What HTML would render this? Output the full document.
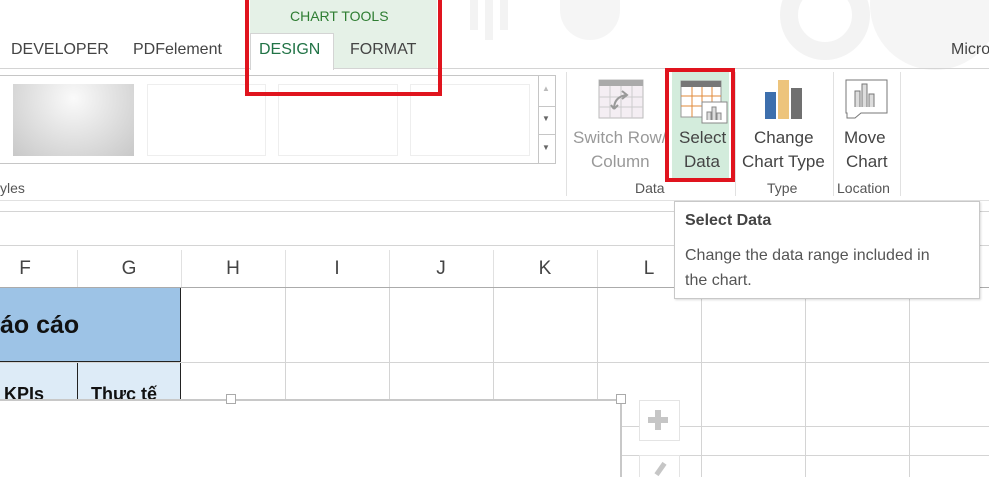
<!DOCTYPE html>
<html style="overflow:hidden;height:477px"><head><meta charset="utf-8"><style>
*{margin:0;padding:0;box-sizing:border-box}
body{width:989px;height:477px;overflow:hidden;background:#fff;font-family:"Liberation Sans",sans-serif;position:relative;color:#444}
.a{position:absolute}
.t{font-size:16px;color:#444;white-space:nowrap}
.vl{position:absolute;width:1px;background:#d4d4d4}
.hl{position:absolute;height:1px;background:#d4d4d4}
.col{position:absolute;top:258px;font-size:19px;color:#444;width:104px;text-align:center}
</style></head><body>
<div class="a" style="left:470px;top:0;width:8px;height:30px;background:#f3f3f3"></div>
<div class="a" style="left:485px;top:0;width:8px;height:40px;background:#f3f3f3"></div>
<div class="a" style="left:500px;top:0;width:8px;height:30px;background:#f3f3f3"></div>
<div class="a" style="left:560px;top:0;width:60px;height:40px;background:#f5f5f5;border-radius:0 0 30px 30px"></div>
<div class="a" style="left:780px;top:-30px;width:90px;height:90px;border:18px solid #f3f3f3;border-radius:50%"></div>
<div class="a" style="left:870px;top:-60px;width:130px;height:130px;background:#f5f5f5;border-radius:50%"></div>

<div class="a" style="left:250px;top:0;width:187px;height:68px;background:#e5f1e7"></div>
<div class="a" style="left:250px;top:33px;width:84px;height:37px;background:#fff;border:1px solid #d4d4d4;border-bottom:none"></div>
<div class="a t" style="left:290px;top:8px;font-size:14px;color:#2e7d32">CHART TOOLS</div>
<div class="a t" style="left:11px;top:41px">DEVELOPER</div>
<div class="a t" style="left:133px;top:41px">PDFelement</div>
<div class="a t" style="left:259px;top:41px;color:#217346">DESIGN</div>
<div class="a t" style="left:350px;top:41px">FORMAT</div>
<div class="a t" style="left:951px;top:41px">Micro</div>
<div class="hl" style="left:0;top:68px;width:250px"></div>
<div class="hl" style="left:334px;top:68px;width:655px"></div>

<div class="a" style="left:0;top:75px;width:556px;height:89px;border:1px solid #c6c6c6;border-left:none"></div>
<div class="a" style="left:13px;top:84px;width:121px;height:72px;background:radial-gradient(ellipse at 50% 20%,#fafafa,#c8c8c8)"></div>
<div class="a" style="left:147px;top:84px;width:119px;height:72px;border:1px solid #eee"></div>
<div class="a" style="left:278px;top:84px;width:120px;height:72px;border:1px solid #eee"></div>
<div class="a" style="left:410px;top:84px;width:120px;height:72px;border:1px solid #eee"></div>
<div class="vl" style="left:538px;top:75px;height:89px;background:#c6c6c6"></div>
<div class="hl" style="left:538px;top:106px;width:18px;background:#c6c6c6"></div>
<div class="hl" style="left:538px;top:134px;width:18px;background:#c6c6c6"></div>
<div class="a" style="left:542px;top:84px;font-size:8px;color:#bbb">▲</div>
<div class="a" style="left:542px;top:114px;font-size:8px;color:#666">▼</div>
<div class="a" style="left:542px;top:143px;font-size:8px;color:#666">▼</div>
<div class="a" style="left:0;top:180px;font-size:14px;color:#555">yles</div>

<div class="vl" style="left:566px;top:72px;height:124px;background:#e1e1e1"></div>
<div class="vl" style="left:735px;top:72px;height:124px;background:#e1e1e1"></div>
<div class="vl" style="left:833px;top:72px;height:124px;background:#e1e1e1"></div>
<div class="vl" style="left:900px;top:72px;height:124px;background:#e1e1e1"></div>
<svg class="a" style="left:598px;top:79px" width="46" height="40"><rect x="1" y="1" width="44" height="38" fill="#f4eef3" stroke="#bbb"/><rect x="1" y="1" width="44" height="6" fill="#aaa"/><path d="M1 18H45M1 28H45M12 7V39M23 7V39M34 7V39" stroke="#ccc"/><path d="M16 30 Q16 18 28 16 M24 12 L29 16 L24 20 M16 30 L13 26 M16 30 L20 26" stroke="#999" stroke-width="2" fill="none"/></svg>
<div class="a t" style="left:573px;top:128px;color:#999;font-size:17px">Switch Row/</div>
<div class="a t" style="left:591px;top:152px;color:#999;font-size:17px">Column</div>
<div class="a" style="left:635px;top:180px;font-size:14px;color:#555">Data</div>
<div class="a" style="left:672px;top:72px;width:57px;height:106px;background:#d3ecdc"></div>
<svg class="a" style="left:680px;top:80px" width="48" height="44"><rect x="1" y="1" width="40" height="36" fill="#fff" stroke="#999"/><rect x="1" y="1" width="40" height="6" fill="#777"/><path d="M1 16H41M1 26H41M12 7V37M22 7V37M32 7V37" stroke="#e08a3a"/><rect x="22" y="22" width="25" height="21" fill="#fff" stroke="#888"/><path d="M27 40V32H31V40M32 40V27H36V40M37 40V33H41V40" stroke="#888" fill="#ddd"/></svg>
<div class="a t" style="left:679px;top:128px;font-size:17px">Select</div>
<div class="a t" style="left:684px;top:152px;font-size:17px">Data</div>
<div class="a" style="left:665px;top:68px;width:70px;height:114px;border:4px solid #e0141e"></div>
<svg class="a" style="left:764px;top:79px" width="40" height="40"><rect x="1" y="13" width="11" height="27" fill="#3d6fad"/><rect x="14" y="1" width="11" height="39" fill="#edc47c"/><rect x="27" y="9" width="11" height="31" fill="#707070"/></svg>
<div class="a t" style="left:754px;top:128px;font-size:17px">Change</div>
<div class="a t" style="left:742px;top:152px;font-size:17px">Chart Type</div>
<div class="a" style="left:767px;top:180px;font-size:14px;color:#555">Type</div>
<svg class="a" style="left:845px;top:79px" width="44" height="40"><path d="M1 1H42V34H16L10 39H2V34H1Z" fill="#fff" stroke="#777"/><path d="M10 28V12H15V28M17 28V5H22V28M24 28V15H29V28" stroke="#777" fill="#ddd"/></svg>
<div class="a t" style="left:844px;top:128px;font-size:17px">Move</div>
<div class="a t" style="left:846px;top:152px;font-size:17px">Chart</div>
<div class="a" style="left:837px;top:180px;font-size:14px;color:#555">Location</div>

<div class="a" style="left:245px;top:-4px;width:197px;height:100px;border:4px solid #e0141e"></div>

<div class="hl" style="left:0;top:200px;width:989px;background:#e1e1e1"></div>
<div class="hl" style="left:0;top:211px;width:989px;background:#d4d4d4"></div>
<div class="hl" style="left:0;top:245px;width:989px;background:#d4d4d4"></div>
<div class="a" style="left:0;top:246px;width:989px;height:41px;background:#fff"></div>
<div class="vl" style="left:77px;top:250px;height:37px;background:#e1e1e1"></div>
<div class="vl" style="left:181px;top:250px;height:37px;background:#e1e1e1"></div>
<div class="vl" style="left:285px;top:250px;height:37px;background:#e1e1e1"></div>
<div class="vl" style="left:389px;top:250px;height:37px;background:#e1e1e1"></div>
<div class="vl" style="left:493px;top:250px;height:37px;background:#e1e1e1"></div>
<div class="vl" style="left:597px;top:250px;height:37px;background:#e1e1e1"></div>
<div class="col" style="left:-27px">F</div>
<div class="col" style="left:77px">G</div>
<div class="col" style="left:181px">H</div>
<div class="col" style="left:285px">I</div>
<div class="col" style="left:389px">J</div>
<div class="col" style="left:493px">K</div>
<div class="col" style="left:597px">L</div>
<div class="hl" style="left:0;top:287px;width:989px;background:#ababab"></div>
<div class="vl" style="left:285px;top:288px;height:189px"></div>
<div class="vl" style="left:389px;top:288px;height:189px"></div>
<div class="vl" style="left:493px;top:288px;height:189px"></div>
<div class="vl" style="left:597px;top:288px;height:189px"></div>
<div class="vl" style="left:701px;top:288px;height:189px"></div>
<div class="vl" style="left:805px;top:288px;height:189px"></div>
<div class="vl" style="left:909px;top:288px;height:189px"></div>
<div class="hl" style="left:0;top:362px;width:989px"></div>
<div class="hl" style="left:620px;top:426px;width:369px"></div>
<div class="hl" style="left:620px;top:455px;width:369px"></div>
<div class="a" style="left:0;top:288px;width:181px;height:74px;background:#9dc3e6;border-right:1px solid #222;border-bottom:1px solid #222"></div>
<div class="a" style="left:0;top:311px;font-size:25px;font-weight:bold;color:#111">áo cáo</div>
<div class="a" style="left:0;top:363px;width:181px;height:40px;background:#ddebf7;border-right:1px solid #222"></div>
<div class="vl" style="left:77px;top:363px;height:40px;background:#222"></div>
<div class="a" style="left:4px;top:384px;font-size:18px;font-weight:bold;color:#111">KPIs</div>
<div class="a" style="left:91px;top:384px;font-size:18px;font-weight:bold;color:#111">Thực tế</div>
<div class="a" style="left:-2px;top:399px;width:624px;height:78px;background:#fff;border:2px solid #c8c8c8;border-bottom:none"></div>
<div class="a" style="left:226px;top:394px;width:10px;height:10px;background:#fff;border:1px solid #aaa"></div>
<div class="a" style="left:616px;top:394px;width:10px;height:10px;background:#fff;border:1px solid #aaa"></div>
<div class="a" style="left:639px;top:400px;width:41px;height:41px;background:#fff;border:1px solid #e4e4e4"></div>
<div class="a" style="left:648px;top:417px;width:20px;height:6px;background:#c6c6c6"></div>
<div class="a" style="left:655px;top:410px;width:6px;height:20px;background:#c6c6c6"></div>
<div class="a" style="left:639px;top:455px;width:41px;height:22px;background:#fff;border:1px solid #e4e4e4;border-bottom:none"></div>
<div class="a" style="left:658px;top:462px;width:5px;height:14px;background:#c6c6c6;transform:rotate(35deg)"></div>
<div class="a" style="left:674px;top:201px;width:306px;height:98px;background:#fff;border:1px solid #c8c8c8;box-shadow:1px 1px 2px rgba(0,0,0,.15)"></div>
<div class="a" style="left:685px;top:212px;font-size:16px;font-weight:bold;color:#444">Select Data</div>
<div class="a" style="left:685px;top:243px;font-size:16px;color:#555;line-height:25px">Change the data range included in<br>the chart.</div>
</body></html>
